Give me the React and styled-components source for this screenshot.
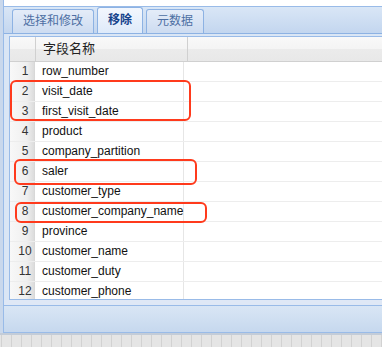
import React from 'react';
import styled, { createGlobalStyle } from 'styled-components';

const GlobalStyle = createGlobalStyle`
  html, body {
    margin: 0;
    padding: 0;
    background: #fff;
  }
  body {
    font-family: "Liberation Sans", "Noto Sans CJK SC", sans-serif;
    font-size: 12px;
  }
`;

const Frame = styled.div`
  position: relative;
  width: 382px;
  height: 347px;
  overflow: hidden;
  display: flex;
  flex-direction: column;
  background: #c9d8ec;
`;

const Main = styled.div`
  display: flex;
  height: 333px;
  padding-left: 3px;
`;

const Panel = styled.div`
  flex: 1;
  display: flex;
  flex-direction: column;
  border-left: 1px solid #99bbe8;
  background: #d6e3f2;
  min-width: 0;
`;

const TopGap = styled.div`
  height: 6px;
  background: #fff;
`;

const TabStrip = styled.div`
  height: 26px;
  display: flex;
  align-items: flex-end;
  gap: 3px;
  padding-left: 8px;
  border-top: 1px solid #99bbe8;
  border-bottom: 1px solid #8db2e3;
  background: linear-gradient(#d9e6f6, #c3d6ef);
`;

const Tab = styled.div`
  height: ${p => (p.$active ? '25px' : '23px')};
  line-height: ${p => (p.$active ? '25px' : '23px')};
  padding: 0 10px;
  border: 1px solid #8db2e3;
  border-bottom: none;
  border-radius: 3px 3px 0 0;
  font-size: 12px;
  font-weight: ${p => (p.$active ? 'bold' : 'normal')};
  color: ${p => (p.$active ? '#15428b' : '#4d6fa3')};
  background: ${p =>
    p.$active
      ? 'linear-gradient(#f3f7fd, #deeafa)'
      : 'linear-gradient(#e4ecf8, #cddcf1)'};
`;

const Body = styled.div`
  padding: 2px 0 0 5px;
  background: #dae6f5;
`;

const Grid = styled.div`
  height: 262px;
  border: 1px solid #99bbe8;
  border-right: none;
  background: #fff;
  display: flex;
  flex-direction: column;
  overflow: hidden;
`;

const HeaderRow = styled.div`
  display: flex;
  height: 24px;
  flex-shrink: 0;
  border-bottom: 1px solid #d0d0d0;
  background: linear-gradient(#f9f9f9 0%, #f4f4f4 50%, #ebebeb 51%, #e8e8e8 100%);
`;

const HeaderCell = styled.div`
  width: ${p => p.$w}px;
  border-right: 1px solid #d0d0d0;
  line-height: 24px;
  padding-left: ${p => (p.$pad ? 7 : 0)}px;
  font-size: 13px;
  color: #222;
  box-sizing: content-box;
`;

const Rows = styled.div`
  flex: 1;
  overflow: hidden;
`;

const Row = styled.div`
  display: flex;
  height: 19px;
  border-bottom: 1px solid #ededed;
`;

const NumCell = styled.div`
  width: 25px;
  padding-left: 6px;
  box-sizing: border-box;
  border-right: 1px solid #d8d8d8;
  text-align: center;
  line-height: 19px;
  font-size: 12px;
  color: #333;
  background: linear-gradient(to right, #f8f8f8 0%, #efefef 70%, #dcdcdc 100%);
`;

const FieldCell = styled.div`
  width: 141px;
  padding-left: 7px;
  border-right: 1px solid #e6e6e6;
  line-height: 19px;
  font-size: 12px;
  color: #111;
  white-space: nowrap;
`;

const Gap = styled.div`
  height: 5px;
  background: #dfe8f6;
`;

const Toolbar = styled.div`
  height: 26px;
  border-top: 1px solid #99bbe8;
  border-bottom: 1px solid #99bbe8;
  background: linear-gradient(#d9e6f5, #c6d8ee);
`;

const StatusBar = styled.div`
  height: 14px;
  border-top: 2px solid #c3ccd8;
  background-color: #e5e5e5;
  background-image: linear-gradient(to right, #d2d2d2 1px, transparent 1px);
  background-size: 10px 100%;
  background-position: 1px 0;
`;

const Mark = styled.div`
  position: absolute;
  left: ${p => p.$x}px;
  top: ${p => p.$y}px;
  width: ${p => p.$w}px;
  height: ${p => p.$h}px;
  box-sizing: border-box;
  border: 2.5px solid #ff3a1c;
  border-radius: 6px;
  pointer-events: none;
`;

const fields = [
  'row_number',
  'visit_date',
  'first_visit_date',
  'product',
  'company_partition',
  'saler',
  'customer_type',
  'customer_company_name',
  'province',
  'customer_name',
  'customer_duty',
  'customer_phone',
];

const tabs = [
  { label: '选择和修改' },
  { label: '移除', active: true },
  { label: '元数据' },
];

const marks = [
  { x: 10, y: 80, w: 181, h: 41 },
  { x: 14, y: 159, w: 183, h: 26 },
  { x: 15, y: 202, w: 192, h: 21 },
];

export default function App() {
  return (
    <>
      <GlobalStyle />
      <Frame>
        <Main>
          <Panel>
            <TopGap />
            <TabStrip>
              {tabs.map(t => (
                <Tab key={t.label} $active={t.active}>{t.label}</Tab>
              ))}
            </TabStrip>
            <Body>
              <Grid>
                <HeaderRow>
                  <HeaderCell $w={25} />
                  <HeaderCell $w={144} $pad>字段名称</HeaderCell>
                </HeaderRow>
                <Rows>
                  {fields.map((f, i) => (
                    <Row key={f}>
                      <NumCell>{i + 1}</NumCell>
                      <FieldCell>{f}</FieldCell>
                    </Row>
                  ))}
                </Rows>
              </Grid>
            </Body>
            <Gap />
            <Toolbar />
          </Panel>
        </Main>
        <StatusBar />
        {marks.map((m, i) => (
          <Mark key={i} $x={m.x} $y={m.y} $w={m.w} $h={m.h} />
        ))}
      </Frame>
    </>
  );
}
